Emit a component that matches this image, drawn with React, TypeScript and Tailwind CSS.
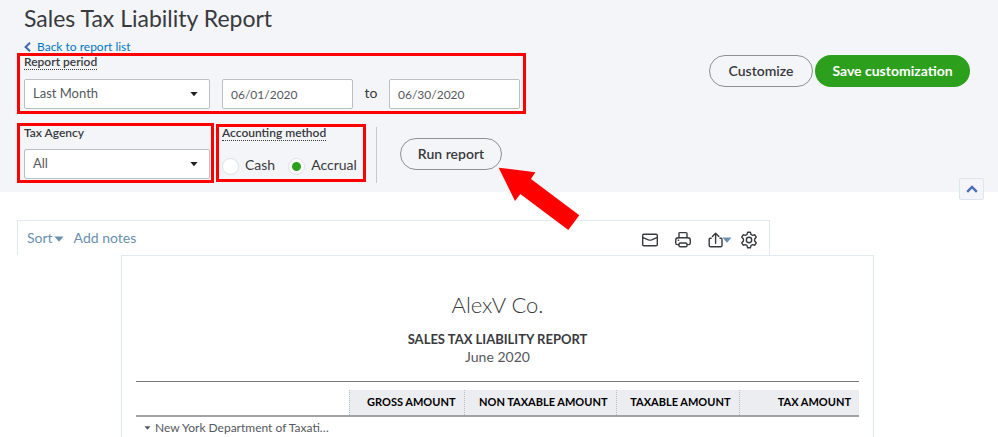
import React, { useState } from "react";

const columns = [
  { label: "Gross amount", width: "w-[115px]" },
  { label: "Non taxable amount", width: "w-[152px]" },
  { label: "Taxable amount", width: "w-[123px]" },
  { label: "Tax amount", width: "w-[120px]" },
];

function Caret({ className }: { className: string }) {
  return (
    <svg viewBox="0 0 10 6" className={className} aria-hidden="true">
      <path d="M0.5 0.5h9L5 5.8z" fill="currentColor" />
    </svg>
  );
}

function SelectBox({
  id,
  value,
  options,
  onChange,
}: {
  id: string;
  value: string;
  options: string[];
  onChange: (value: string) => void;
}) {
  return (
    <div className="relative w-[186px]">
      <select
        id={id}
        value={value}
        onChange={(e) => onChange(e.target.value)}
        className="block h-[30px] w-full appearance-none rounded-xs border border-[#babec5] bg-white px-2 text-[13px] text-[#55585e]"
      >
        {options.map((option) => (
          <option key={option}>{option}</option>
        ))}
      </select>
      <Caret className="pointer-events-none absolute top-3 right-3 h-[6px] w-2 text-[#222]" />
    </div>
  );
}

function MailIcon() {
  return (
    <svg viewBox="0 0 18 18" className="size-[18px]" fill="none" stroke="currentColor" strokeWidth="1.4" strokeLinejoin="round" strokeLinecap="round">
      <rect x="1.7" y="3.2" width="14.6" height="11.6" rx="1.2" />
      <path d="M2 6.6l5.4 2.2q1.6.6 3.2 0L16 6.6" />
    </svg>
  );
}

function PrintIcon() {
  return (
    <svg viewBox="0 0 18 18" className="size-[18px]" fill="none" stroke="currentColor" strokeWidth="1.4" strokeLinejoin="round" strokeLinecap="round">
      <path d="M5 6.8V2.6q0-1 1-1h6q1 0 1 1v4.2" />
      <path d="M4.8 13.6H3.4q-1.7 0-1.7-1.7V9.2q0-2.4 2.4-2.4h9.8q2.4 0 2.4 2.4v2.7q0 1.7-1.7 1.7h-1.4" />
      <rect x="5" y="12" width="8" height="3.8" rx="1.2" />
      <path d="M4.2 9.3h.4" />
    </svg>
  );
}

function ExportIcon() {
  return (
    <svg viewBox="0 0 18 18" className="size-[18px]" fill="none" stroke="currentColor" strokeWidth="1.4" strokeLinejoin="round" strokeLinecap="round">
      <path d="M4.2 7.2H3.2q-1 0-1 1v6.2q0 1.4 1.4 1.4h10q1.4 0 1.4-1.4V8.2q0-1-1-1H13" />
      <path d="M8.6 12.2V2.4M5.4 5.4l3.2-3.2 3.2 3.2" />
    </svg>
  );
}

function GearIcon() {
  return (
    <svg viewBox="0 0 18 18" className="size-[18px]" fill="none" stroke="currentColor" strokeWidth="1.4" strokeLinejoin="round">
      <path d="M7.6 1.2h2.8l.6 2.3 1.5.9 2.3-.6 1.4 2.4L14.600 8v2l1.600 1.800-1.400 2.400-2.300-.600-1.500.900-.600 2.300H7.600L7 14.500l-1.500-.900-2.300.600-1.400-2.400L3.400 10V8L1.800 6.200l1.400-2.400 2.300.600L7 3.500z" />
      <circle cx="9" cy="9" r="2.7" />
    </svg>
  );
}

export default function App() {
  const [period, setPeriod] = useState("Last Month");
  const [from, setFrom] = useState("06/01/2020");
  const [to, setTo] = useState("06/30/2020");
  const [agency, setAgency] = useState("All");
  const [method, setMethod] = useState("Accrual");

  const inputClass =
    "block h-[30px] w-[131px] rounded-xs border border-[#babec5] bg-white px-2 text-[12px] text-[#55585e]";
  const radioClass =
    "size-[17px] shrink-0 appearance-none rounded-full border border-[#dcdfe4] bg-white checked:bg-[radial-gradient(circle,#2ca01c_4px,#fff_5px)]";

  return (
    <div className="min-h-screen overflow-hidden bg-white font-['Lato','Open_Sans',sans-serif] text-[#393a3d]">
      <header className="relative bg-[#f4f5f8] pb-[9px] pl-[17px]">
        <div className="flex items-start justify-between pr-7">
          <div>
            <h1 className="pt-[3px] pl-[7px] text-[23px] leading-[30px]">Sales Tax Liability Report</h1>
            <a href="#reports" className="mt-2 ml-[7px] flex h-3 items-center gap-[6px] text-[12px] leading-3 text-[#0077c5]">
              <svg viewBox="0 0 7 10" className="h-[10px] w-[7px]" fill="none" stroke="#4468b0" strokeWidth="2">
                <path d="M6 0.8L1.6 5L6 9.2" />
              </svg>
              Back to report list
            </a>

            <div className="w-[509px] border-3 border-[#ff0000] pb-[2px] pl-1">
              <label htmlFor="period" className="block h-[14px] w-fit border-b border-dotted border-[#393a3d] text-[12px] leading-3 font-semibold">
                Report period
              </label>
              <div className="mt-[9px] flex items-center">
                <SelectBox id="period" value={period} options={["Last Month", "This Month", "Last Quarter"]} onChange={setPeriod} />
                <input aria-label="From date" value={from} onChange={(e) => setFrom(e.target.value)} className={`${inputClass} ml-3`} />
                <span className="w-9 pb-1 text-center text-[14px]">to</span>
                <input aria-label="To date" value={to} onChange={(e) => setTo(e.target.value)} className={inputClass} />
              </div>
            </div>
          </div>

          <div className="mt-[55px] flex gap-[2px]">
            <button type="button" className="h-8 w-[104px] rounded-full border border-[#8d9096] pb-[2px] text-[14px] font-semibold">
              Customize
            </button>
            <button type="button" className="h-8 w-[155px] rounded-full bg-[#2ca01c] pb-[2px] text-[14px] font-bold text-white">
              Save customization
            </button>
          </div>
        </div>

        <div className="mt-[9px] flex items-start">
          <div className="h-[60px] w-[197px] border-3 border-[#ff0000] pl-1">
            <label htmlFor="agency" className="block h-[14px] text-[12px] leading-[14px] font-semibold">
              Tax Agency
            </label>
            <div className="mt-[9px]">
              <SelectBox id="agency" value={agency} options={["All", "New York"]} onChange={setAgency} />
            </div>
          </div>

          <fieldset className="mt-px ml-[2px] h-[58px] w-[150px] border-3 border-[#ff0000] pl-[3px]">
            <span className="block h-[14px] w-fit border-b border-dotted border-[#393a3d] text-[12px] leading-3 font-semibold">
              Accounting method
            </span>
            <div className="mt-[17px] flex gap-[13px] text-[14px]">
              {["Cash", "Accrual"].map((name) => (
                <label key={name} className="flex h-[17px] items-center gap-[6px]">
                  <input
                    type="radio"
                    name="method"
                    checked={method === name}
                    onChange={() => setMethod(name)}
                    className={radioClass}
                  />
                  <span className="pb-1 leading-4">{name}</span>
                </label>
              ))}
            </div>
          </fieldset>

          <div className="mt-1 ml-[10px] h-14 border-l border-[#c7c9ce]" />

          <div className="relative mt-[15px] ml-[23px]">
            <button type="button" className="h-8 w-[102px] rounded-full border border-[#8d9096] pb-[2px] text-[14px] font-semibold">
              Run report
            </button>
            <svg viewBox="0 0 82 64" className="pointer-events-none absolute top-[29px] left-[98px] z-10 h-16 w-[82px]">
              <path d="M0.7 0.7L37.3 5.3L33 12L81.3 48.3L70.3 63L22.3 27L17 34z" fill="#ff0000" />
            </svg>
          </div>
        </div>

        <button
          type="button"
          aria-label="Collapse filters"
          className="absolute right-[14px] -bottom-2 flex h-[22px] w-[25px] items-center justify-center rounded-xs border border-[#dfe5ef] bg-[#f4f5f8]"
        >
          <svg viewBox="0 0 12 8" className="h-2 w-3" fill="none" stroke="#4a6cb5" strokeWidth="2.4">
            <path d="M1.2 6.8L6 2l4.8 4.8" />
          </svg>
        </button>
      </header>

      <main className="pt-7">
        <div className="mr-[228px] ml-[17px] flex h-[35px] items-center justify-between border border-b-0 border-[#e3e9f3] pr-[11px] pl-[9px]">
          <div className="flex items-center gap-[10px] pb-[2px] text-[14px] text-[#6b8fae]">
            <button type="button" className="flex items-center">
              Sort
              <Caret className="mt-1 ml-px h-[6px] w-[10px]" />
            </button>
            <button type="button">Add notes</button>
          </div>
          <div className="flex items-center pt-1">
            <button type="button" aria-label="Email" className="mr-[15px]">
              <MailIcon />
            </button>
            <button type="button" aria-label="Print" className="mr-[15px]">
              <PrintIcon />
            </button>
            <button type="button" aria-label="Export" className="mr-2 flex items-center">
              <ExportIcon />
              <Caret className="-ml-[3px] h-[6px] w-[10px] text-[#6b8fae]" />
            </button>
            <button type="button" aria-label="Settings">
              <GearIcon />
            </button>
          </div>
        </div>

        <section className="mr-[124px] ml-[121px] min-h-[182px] border border-b-0 border-[#e3e9f3] px-[14px] pt-[35px]">
          <div className="text-center">
            <h2 className="text-[22px] leading-7 font-light">AlexV Co.</h2>
            <h3 className="mt-3 text-[13px] leading-4 font-bold uppercase">Sales Tax Liability Report</h3>
            <p className="mt-px text-[14px] leading-[18px] text-[#55585e]">June 2020</p>
          </div>

          <div className="mt-[15px] border-t border-[#77797e] pt-2">
            <table className="w-full table-fixed border-collapse">
              <thead>
                <tr className="h-[26px] border-b-2 border-[#a0a2a6]">
                  <td />
                  {columns.map((column) => (
                    <th
                      key={column.label}
                      scope="col"
                      className={`${column.width} border-l border-dotted border-l-[#babec5] bg-[#ecedf1] pr-2 pb-[2px] text-right text-[11px] leading-4 font-bold text-black uppercase`}
                    >
                      {column.label}
                    </th>
                  ))}
                </tr>
              </thead>
              <tbody>
                <tr>
                  <td className="pt-[2px] pl-2 text-[12px] leading-[18px] text-[#55585e]">
                    <button type="button" className="flex items-center gap-1 whitespace-nowrap">
                      <Caret className="h-1 w-[7px] shrink-0" />
                      New York Department of Taxati…
                    </button>
                  </td>
                  <td colSpan={4} />
                </tr>
              </tbody>
            </table>
          </div>
        </section>
      </main>
    </div>
  );
}
